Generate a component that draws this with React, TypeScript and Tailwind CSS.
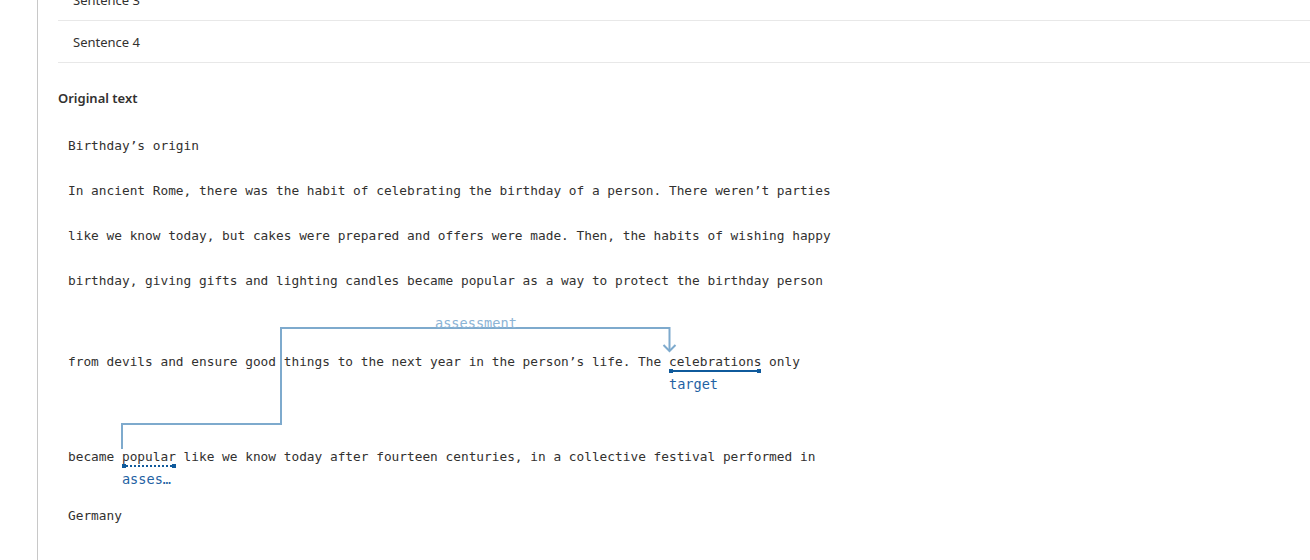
import React from "react";

const mono = { fontFamily: '"DejaVu Sans Mono", "Liberation Mono", monospace' };

function Line({ children, className = "" }: { children: React.ReactNode; className?: string }) {
  return (
    <div className={"h-[18px] leading-[18px] whitespace-pre text-[12.8px] text-[#323130] " + className} style={mono}>
      {children}
    </div>
  );
}

function Mark({ word, label, dotted }: { word: string; label: string; dotted?: boolean }) {
  return (
    <span className="relative">
      {word}
      {dotted ? (
        <span className="absolute left-0 right-0 top-[16px] h-0 border-t-2 border-dotted border-[#0f5a9c]" />
      ) : (
        <span className="absolute left-0 right-0 top-[16px] h-[2px] bg-[#0f5a9c]" />
      )}
      <span className="absolute left-0 top-[15px] w-[4px] h-[4px] bg-[#0f5a9c]" />
      <span className="absolute right-0 top-[15px] w-[4px] h-[4px] bg-[#0f5a9c]" />
      <span className="absolute left-0 top-[21px] text-[13.6px] leading-[18px] text-[#1f62a3]">{label}</span>
    </span>
  );
}

export default function App() {
  return (
    <div className="relative flex w-[1310px] h-[560px] overflow-hidden bg-white" style={{ fontFamily: '"Noto Sans", "Open Sans", sans-serif' }}>
      <div className="w-[38px] shrink-0 border-r border-[#c8c8c8]" />
      <div className="flex-1 pl-[20px]">
        <div className="mt-[-21px] flex flex-col">
          <div className="h-[42px] flex items-center pt-[3px] pl-[15px] text-[13px] text-[#323130] border-b border-[#e8e8e8]">Sentence 3</div>
          <div className="h-[42px] flex items-center pt-[3px] pl-[15px] text-[13px] text-[#323130] border-b border-[#e8e8e8]">Sentence 4</div>
        </div>
        <div className="mt-[26px] h-[18px] leading-[18px] text-[13px] font-semibold text-[#323130]">Original text</div>
        <div className="pl-[10px] flex flex-col">
          <Line className="mt-[30px]">Birthday’s origin</Line>
          <Line className="mt-[27px]">In ancient Rome, there was the habit of celebrating the birthday of a person. There weren’t parties</Line>
          <Line className="mt-[27px]">like we know today, but cakes were prepared and offers were made. Then, the habits of wishing happy</Line>
          <Line className="mt-[27px]">birthday, giving gifts and lighting candles became popular as a way to protect the birthday person</Line>
          <Line className="mt-[63px]">
            {"from devils and ensure good things to the next year in the person’s life. The "}
            <Mark word="celebrations" label="target" />
            {" only"}
          </Line>
          <Line className="mt-[77px]">
            {"became "}
            <Mark word="popular" label="asses…" dotted />
            {" like we know today after fourteen centuries, in a collective festival performed in"}
          </Line>
          <Line className="mt-[41px]">Germany</Line>
        </div>
      </div>
      <svg className="absolute left-0 top-0 pointer-events-none" width="1310" height="560" viewBox="0 0 1310 560">
        <path d="M122 449 V424 H281 V328 H669.5 V351" fill="none" stroke="#7eaacd" strokeWidth="2" />
        <path d="M663.5 345 L669.5 351 L675.5 345" fill="none" stroke="#7eaacd" strokeWidth="2" />
      </svg>
      <div className="absolute left-[435px] top-[315px] text-[13.6px] leading-[16px] text-[#8cb4d6]" style={mono}>assessment</div>
    </div>
  );
}
